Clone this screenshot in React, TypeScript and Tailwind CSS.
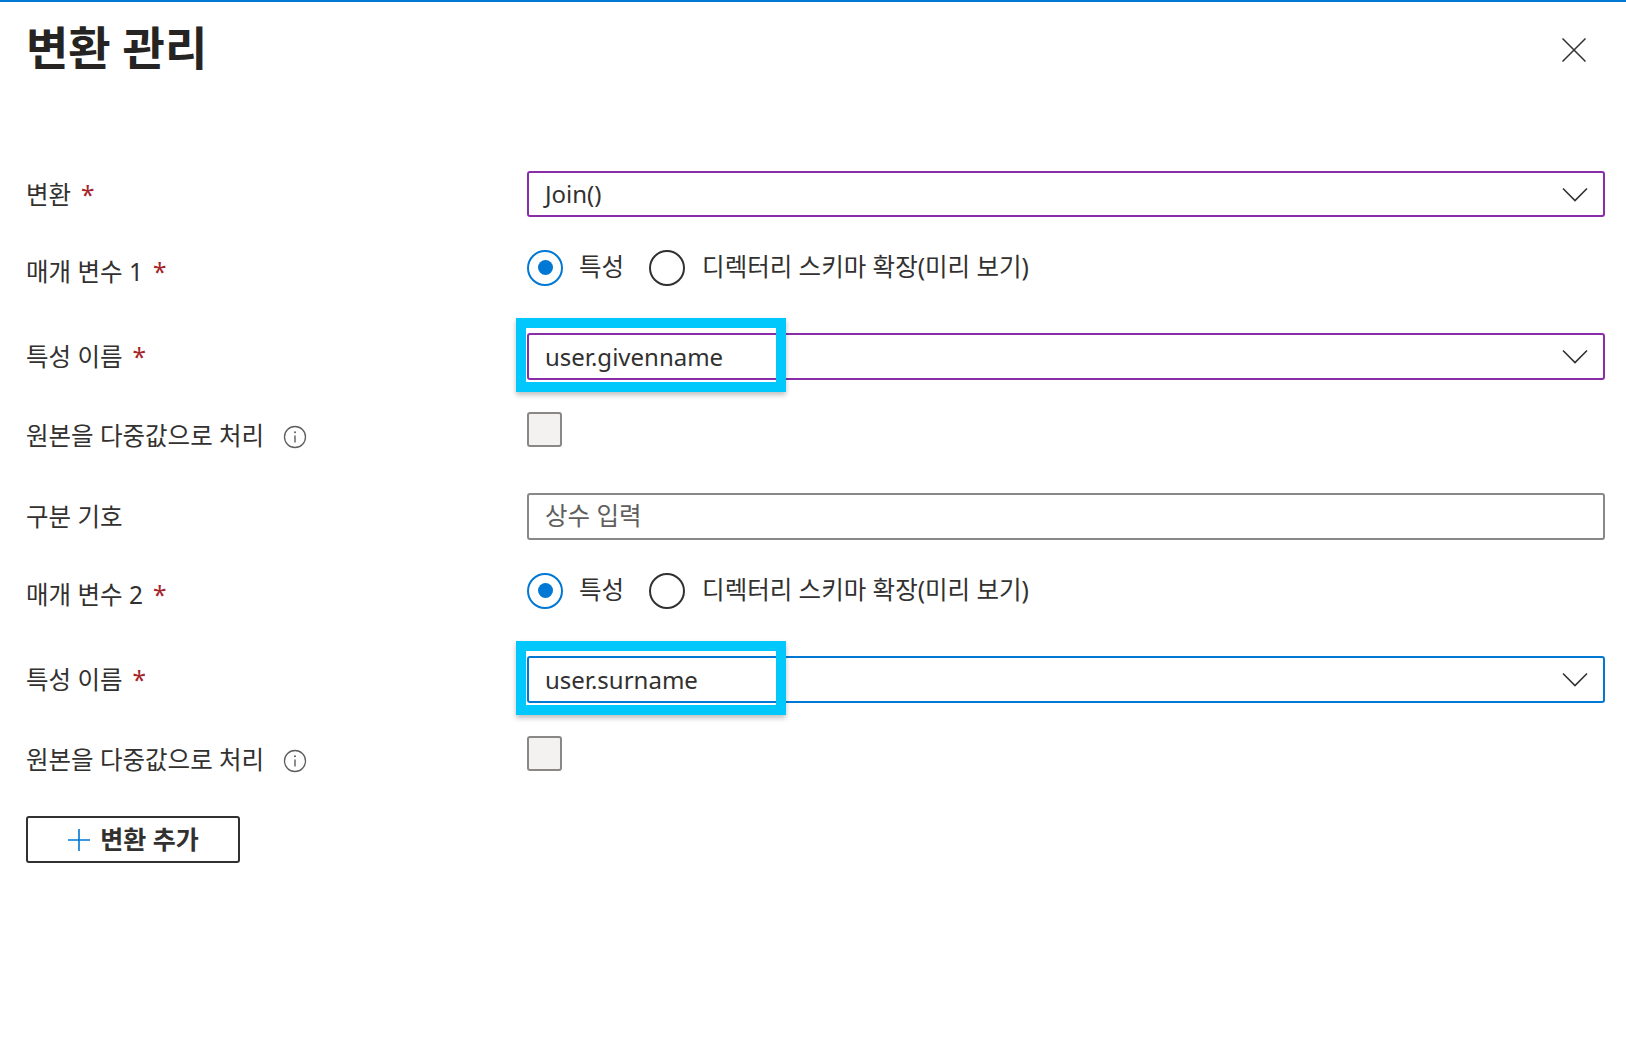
import React from 'react';

const font = "font-['Noto_Sans','Noto_Sans_CJK_KR',sans-serif]";

function Required() {
  return <span className="ml-[10px] text-[#a4262c]">*</span>;
}

function Label({ text, required, info, h, offset = 'pt-[2px]' }: { text: string; required?: boolean; info?: boolean; h: string; offset?: string }) {
  return (
    <div className={`w-[501px] shrink-0 flex items-center text-[24.5px] text-[#323130] ${h} ${offset}`}>
      <span>{text}</span>
      {required && <Required />}
      {info && (
        <svg className="ml-[19px]" width="24" height="24" viewBox="0 0 24 24" fill="none">
          <circle cx="12" cy="12" r="10.5" stroke="#605e5c" strokeWidth="1.3" />
          <circle cx="12" cy="7.3" r="1" fill="#605e5c" />
          <path d="M12 10.5v7" stroke="#605e5c" strokeWidth="1.4" />
        </svg>
      )}
    </div>
  );
}

function Chevron() {
  return (
    <svg width="26" height="15" viewBox="0 0 26 15" fill="none">
      <path d="M1 1.5l12 12 12-12" stroke="#323130" strokeWidth="1.6" />
    </svg>
  );
}

function Dropdown({ value, border, highlight }: { value: string; border: string; highlight?: boolean }) {
  return (
    <div className="relative">
      <div className={`h-[47px] rounded-[3px] border-2 ${border} flex items-center justify-between pl-[16px] pr-[15px] text-[24px] text-[#323130]`}>
        <span>{value}</span>
        <Chevron />
      </div>
      {highlight && (
        <div className="absolute left-[-11px] top-[-15px] w-[270px] h-[74px] border-[10px] border-[#00c8fc] shadow-[0_3px_5px_rgba(0,0,0,0.25)]" />
      )}
    </div>
  );
}

function Radio({ checked }: { checked?: boolean }) {
  return (
    <span
      className={`w-[36px] h-[36px] rounded-full border-2 flex items-center justify-center ${
        checked ? 'border-[#0078d4]' : 'border-[#323130]'
      }`}
    >
      {checked && <span className="w-[15px] h-[15px] rounded-full bg-[#0078d4]" />}
    </span>
  );
}

function RadioGroup() {
  return (
    <div className="flex items-center h-[35px] text-[24.5px] text-[#323130]">
      <Radio checked />
      <span className="ml-[16px]">특성</span>
      <span className="ml-[25px]">
        <Radio />
      </span>
      <span className="ml-[17px]">디렉터리 스키마 확장(미리 보기)</span>
    </div>
  );
}

function Checkbox() {
  return <div className="w-[35px] h-[35px] rounded-[3px] border-2 border-[#8a8886] bg-[#f3f2f1]" />;
}

export default function App() {
  return (
    <div className={`w-[1626px] h-[1050px] bg-white border-t-2 border-[#0078d4] ${font}`}>
      <div className="h-[169px] flex justify-between items-start pl-[26px] pr-[40px]">
        <h1 className="mt-[14px] text-[46px] leading-[62px] font-bold text-[#252423]">변환 관리</h1>
        <button className="mt-[36px]">
          <svg width="24" height="24" viewBox="0 0 24 24" fill="none">
            <path d="M0.5 0.5l23 23M23.5 0.5l-23 23" stroke="#323130" strokeWidth="1.5" />
          </svg>
        </button>
      </div>

      <div className="pl-[26px] pr-[21px]">
        <div className="flex h-[79px]">
          <Label text="변환" required h="h-[46px]" />
          <div className="flex-1">
            <div className="h-[46px] rounded-[3px] border-2 border-[#8a2da8] flex items-center justify-between pl-[16px] pr-[15px] text-[24px] text-[#323130]">
              <span>Join()</span>
              <Chevron />
            </div>
          </div>
        </div>

        <div className="flex h-[83px]">
          <Label text="매개 변수 1" required h="h-[35px]" offset="pt-[10px]" />
          <div className="flex-1">
            <RadioGroup />
          </div>
        </div>

        <div className="flex h-[79px]">
          <Label text="특성 이름" required h="h-[47px]" />
          <div className="flex-1">
            <Dropdown value="user.givenname" border="border-[#8a2da8]" highlight />
          </div>
        </div>

        <div className="flex h-[81px]">
          <Label text="원본을 다중값으로 처리" info h="h-[35px]" offset="pt-[14px]" />
          <div className="flex-1">
            <Checkbox />
          </div>
        </div>

        <div className="flex h-[80px]">
          <Label text="구분 기호" h="h-[47px]" />
          <div className="flex-1">
            <div className="h-[47px] rounded-[3px] border-2 border-[#8a8886] flex items-center pl-[16px] text-[24.5px] text-[#605e5c]">
              상수 입력
            </div>
          </div>
        </div>

        <div className="flex h-[83px]">
          <Label text="매개 변수 2" required h="h-[35px]" offset="pt-[10px]" />
          <div className="flex-1">
            <RadioGroup />
          </div>
        </div>

        <div className="flex h-[80px]">
          <Label text="특성 이름" required h="h-[47px]" />
          <div className="flex-1">
            <Dropdown value="user.surname" border="border-[#0078d4]" highlight />
          </div>
        </div>

        <div className="flex h-[80px]">
          <Label text="원본을 다중값으로 처리" info h="h-[35px]" offset="pt-[14px]" />
          <div className="flex-1">
            <Checkbox />
          </div>
        </div>

        <button className="w-[214px] h-[47px] rounded-[3px] border-2 border-[#323130] flex items-center justify-center gap-[9px] text-[25px] font-bold text-[#323130]">
          <svg width="24" height="24" viewBox="0 0 24 24" fill="none">
            <path d="M12 1v22M1 12h22" stroke="#0078d4" strokeWidth="1.6" />
          </svg>
          <span>변환 추가</span>
        </button>
      </div>
    </div>
  );
}
